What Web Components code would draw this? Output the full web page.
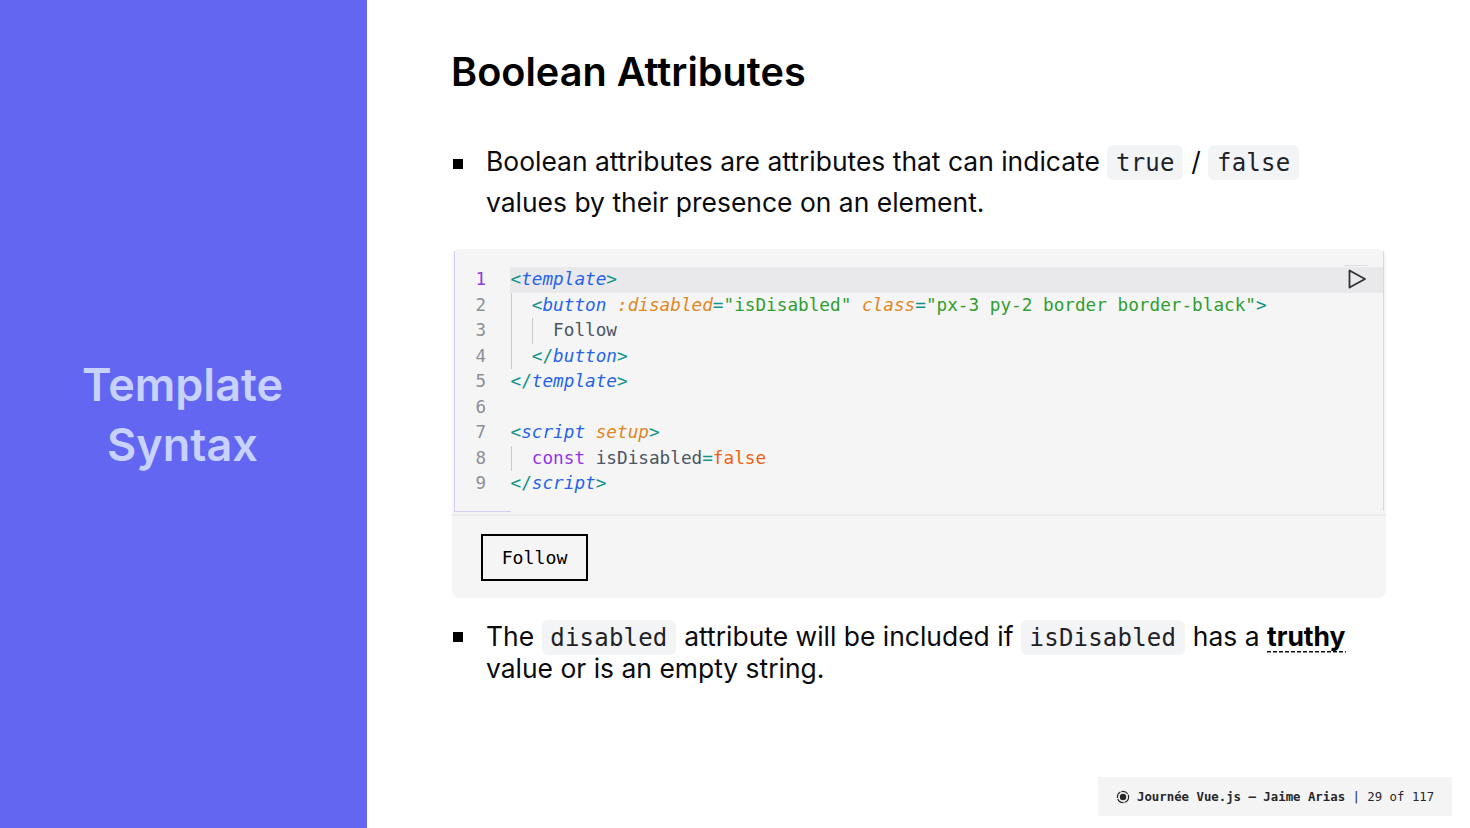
<!DOCTYPE html>
<html lang="en">
<head>
<meta charset="utf-8">
<title>Boolean Attributes</title>
<style>
  html, body { margin: 0; padding: 0; height: 100%; background: #fff; overflow: hidden; }
  body { font-family: Inter, "Liberation Sans", sans-serif; }
</style>
</head>
<body>
<slide-deck>
  <slide-sidebar slot="side">Template<br>Syntax</slide-sidebar>
  <slide-title>Boolean Attributes</slide-title>
  <slide-bullet class="loose">Boolean attributes are attributes that can indicate <inline-code>true</inline-code> / <inline-code>false</inline-code><br>values by their presence on an element.</slide-bullet>
  <code-demo></code-demo>
  <slide-bullet>The <inline-code>disabled</inline-code> attribute will be included if <inline-code>isDisabled</inline-code> has a <dash-term>truthy</dash-term><br>value or is an empty string.</slide-bullet>
  <slide-footer slot="footer"></slide-footer>
</slide-deck>

<script>
class SlideDeck extends HTMLElement {
  constructor() {
    super();
    this.attachShadow({ mode: "open" });
    this.shadowRoot.innerHTML = `
      <style>
        :host { display: grid; grid-template-columns: 367px 1fr; width: 1470px; height: 828px; position: relative; color: #000; }
        main { display: flex; flex-direction: column; padding: 0 84px 0 85px; min-width: 0; }
        .footer { position: absolute; right: 18px; bottom: 12px; }
      </style>
      <slot name="side"></slot>
      <main><slot></slot></main>
      <div class="footer"><slot name="footer"></slot></div>
    `;
  }
}

class SlideSidebar extends HTMLElement {
  constructor() {
    super();
    this.attachShadow({ mode: "open" });
    this.shadowRoot.innerHTML = `
      <style>
        :host { display: flex; align-items: center; justify-content: center; background: #6366f1; color: #c7d2fe;
          font: 600 45px/60px Inter, sans-serif; text-align: center; padding: 2px 2px 0 0; }
      </style>
      <div><slot></slot></div>
    `;
  }
}

class SlideTitle extends HTMLElement {
  constructor() {
    super();
    this.attachShadow({ mode: "open" });
    this.shadowRoot.innerHTML = `
      <style>
        :host { display: block; font: 600 39.66px/48px Inter, sans-serif; margin: 48px 0 45px -1px; color: #000; }
      </style>
      <slot></slot>
    `;
  }
}

class SlideBullet extends HTMLElement {
  constructor() {
    super();
    this.attachShadow({ mode: "open" });
    this.shadowRoot.innerHTML = `
      <style>
        :host { display: flex; font: 400 26.45px/32px Inter, sans-serif; color: #0b0b0f; margin-top: 22px; }
        :host(.loose) { line-height: 41px; margin: 0 0 26px; }
        i { flex: none; width: 10px; height: 10px; background: #000; margin: 12px 23px 0 1px; }
        :host(.loose) i { margin-top: 18px; }
        div { white-space: nowrap; }
      </style>
      <i></i><div><slot></slot></div>
    `;
  }
}

class InlineCode extends HTMLElement {
  constructor() {
    super();
    this.attachShadow({ mode: "open" });
    // no whitespace round the slot: this host is inline, a space would widen the chip
    this.shadowRoot.innerHTML = `<style>
        :host { display: inline; font: 400 24px/1 "DejaVu Sans Mono", monospace; letter-spacing: .2px; background: #f3f4f6; border-radius: 6px;
          padding: 4px 8.75px 3px; margin: 0 .5px 0 0; color: #1f2328; }
      </style><slot></slot>`;
  }
}

class DashTerm extends HTMLElement {
  constructor() {
    super();
    this.attachShadow({ mode: "open" });
    this.shadowRoot.innerHTML = `
      <style>
        :host { display: inline-block; font-weight: 700; color: #000; line-height: 28px; padding-bottom: 2.5px; margin-bottom: -3px;
          background: repeating-linear-gradient(90deg, #111 0 4px, transparent 4px 6px) left bottom / 100% 1.5px no-repeat; }
      </style>
      <slot></slot>
    `;
  }
}

const CODE_LINES = [
  [0, '<t class="p">&lt;</t><t class="t">template</t><t class="p">&gt;</t>'],
  [1, '<t class="p">&lt;</t><t class="t">button</t> <t class="a">:disabled</t><t class="p">=</t><t class="s">"isDisabled"</t> <t class="a">class</t><t class="p">=</t><t class="s">"px-3 py-2 border border-black"</t><t class="p">&gt;</t>'],
  [2, 'Follow'],
  [1, '<t class="p">&lt;/</t><t class="t">button</t><t class="p">&gt;</t>'],
  [0, '<t class="p">&lt;/</t><t class="t">template</t><t class="p">&gt;</t>'],
  [0, ''],
  [0, '<t class="p">&lt;</t><t class="t">script</t> <t class="a">setup</t><t class="p">&gt;</t>'],
  [1, '<t class="k">const</t> isDisabled<t class="p">=</t><t class="b">false</t>'],
  [0, '<t class="p">&lt;/</t><t class="t">script</t><t class="p">&gt;</t>'],
];

class CodeDemo extends HTMLElement {
  constructor() {
    super();
    this.attachShadow({ mode: "open" });
    const rows = CODE_LINES.map(([indent, html], i) => {
      const guides = '<b class="guide"></b>'.repeat(indent);
      return `<div class="row${i === 0 ? " active" : ""}"><span class="num">${i + 1}</span><span class="src">${guides}${html}</span></div>`;
    }).join("");
    this.shadowRoot.innerHTML = `
      <style>
        :host { display: block; background: #f5f5f5; border-radius: 8px; overflow: hidden; }
        .editor { position: relative; height: 267px; box-sizing: border-box; padding-top: 18px; border-bottom: 2px solid #ececee;
          font: 400 17.7px/25.5px "DejaVu Sans Mono", monospace; color: #4b5563; }
        .editor::before { content: ""; position: absolute; left: 2px; top: 0; width: 57px; height: 263px; border: solid #d8cdf0; border-width: 0 0 1px 1px; box-sizing: border-box; }
        .editor::after { content: ""; position: absolute; right: 2px; top: 0; bottom: 3px; width: 1px; background: #d9d6e8; }
        .row { display: flex; height: 25.5px; white-space: pre; }
        .num { flex: none; width: 34px; margin-right: 24px; text-align: right; color: #8b8f98; font-size: 17.5px; }
        .src { flex: 1; position: relative; padding-left: .5px; }
        .active .src { background: #e9e9eb; margin-right: 2px; }
        .active .num { color: #8b3fe0; }
        .guide { display: inline-block; width: 21.3px; height: 25.5px; vertical-align: top; box-sizing: border-box; border-left: 1px solid #c9c9cc; }
        t { display: inline; }
        .p { color: #0f9488; }
        .t { color: #2563eb; font-style: italic; }
        .a { color: #e0861c; font-style: italic; }
        .s { color: #2f9e2f; }
        .k { color: #9333ea; }
        .b { color: #f0600f; }
        .play { position: absolute; left: 892px; top: 16px; width: 24px; height: 27px; border-top: 1px solid #dcdcde; box-sizing: border-box; }
        svg { display: block; margin: 3px 0 0 3px; }
        .output { padding: 18px 29px 17px; height: 82px; box-sizing: border-box; }
        button { display: block; box-sizing: border-box; width: 107px; height: 47px; border: 2px solid #000; background: transparent; padding: 0 0 1px;
          font: 400 18.2px "DejaVu Sans Mono", monospace; color: #000; }
      </style>
      <div class="editor">
        ${rows}
        <div class="play"><svg width="20" height="20" viewBox="0 0 20 20"><path d="M2.5 1.5 L18 10 L2.5 18.5 Z" fill="none" stroke="#2f3136" stroke-width="1.8" stroke-linejoin="round"/></svg></div>
      </div>
      <div class="output"><button>Follow</button></div>
    `;
  }
}

class SlideFooter extends HTMLElement {
  constructor() {
    super();
    this.attachShadow({ mode: "open" });
    this.shadowRoot.innerHTML = `
      <style>
        :host { display: flex; align-items: center; box-sizing: border-box; width: 354px; height: 39px; padding: 0 18px; background: #f4f4f5;
          font: 400 12.35px "DejaVu Sans Mono", monospace; color: #27272a; white-space: pre; }
        svg { flex: none; margin-right: 7px; }
        strong { font-weight: 700; }
        .sep { margin: 0 7.4px; }
      </style>
      <svg width="14" height="14" viewBox="0 0 14 14"><circle cx="7" cy="7" r="5.6" fill="none" stroke="#27272a" stroke-width="1.2" stroke-dasharray="7 1"/><circle cx="7" cy="7" r="3.2" fill="#27272a"/></svg>
      <strong>Journée Vue.js – Jaime Arias</strong><span class="sep">|</span><span>29 of 117</span>
    `;
  }
}

customElements.define("slide-deck", SlideDeck);
customElements.define("slide-sidebar", SlideSidebar);
customElements.define("slide-title", SlideTitle);
customElements.define("slide-bullet", SlideBullet);
customElements.define("inline-code", InlineCode);
customElements.define("dash-term", DashTerm);
customElements.define("code-demo", CodeDemo);
customElements.define("slide-footer", SlideFooter);
</script>
</body>
</html>
